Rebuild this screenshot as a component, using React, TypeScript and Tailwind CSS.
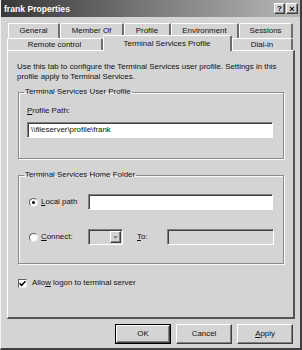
import React from "react";

const sunken =
  "border border-t-[#808080] border-l-[#808080] border-r-white border-b-white shadow-[inset_1px_1px_0_#404040]";
const raised =
  "border border-t-white border-l-white border-r-[#404040] border-b-[#404040] shadow-[inset_-1px_-1px_0_#808080]";

function Tab({ label, w, active }: { label: string; w: string; active?: boolean }) {
  return (
    <div
      className={`${w} ${
        active ? "h-[16px] mb-[-1px] relative z-20" : "h-full"
      } flex items-center justify-center bg-[#d4d4d4] rounded-t-[2px] border-l border-t border-white border-r-2 border-r-[#6e6e6e]`}
    >
      {label}
    </div>
  );
}

function WinButton({ children, def }: { children: React.ReactNode; def?: boolean }) {
  return (
    <div
      className={`w-[56px] h-[20px] flex items-center justify-center ${
        def ? "border border-black" : ""
      }`}
    >
      <div className={`w-full h-full flex items-center justify-center ${raised}`}>{children}</div>
    </div>
  );
}

function Group({ title, children, className }: { title: string; children: React.ReactNode; className?: string }) {
  return (
    <fieldset
      className={`w-[266px] ml-[1px] border border-[#8a8a8a] shadow-[inset_1px_1px_0_#fafafa,1px_1px_0_#fafafa] ${className ?? ""}`}
    >
      <legend className="ml-[5px] px-[1px] leading-[10px]">{title}</legend>
      {children}
    </fieldset>
  );
}

export default function App() {
  return (
    <div className="w-[302px] h-[350px] bg-[#d4d4d4] flex flex-col border-l border-l-[#f2f2f2] border-r-2 border-r-[#404040] border-b-2 border-b-[#404040] font-['Liberation_Sans',Arial,sans-serif] text-[7.9px] leading-[10px] text-[#111] overflow-hidden">
      {/* Title bar */}
      <div className="h-[17px] shrink-0 flex items-center pl-[3px] pr-[2px] bg-gradient-to-r from-[#383838] via-[#7a7a7a] to-[#b8b8b8]">
        <span className="text-white font-bold text-[8.6px] flex-1">frank Properties</span>
        <div className="flex gap-[1px]">
          <div className={`w-[11px] h-[11px] bg-[#d4d4d4] flex items-center justify-center font-bold text-[8px] text-black ${raised}`}>
            ?
          </div>
          <div className={`w-[12px] h-[11px] bg-[#d4d4d4] flex items-center justify-center font-bold text-[9px] text-black ${raised}`}>
            ×
          </div>
        </div>
      </div>

      <div className="flex-1 flex flex-col pl-[6px] pr-[7px]">
        {/* Tabs */}
        <div className="flex h-[15px] mt-[6px] ml-[1px]">
          <Tab label="General" w="w-[52px]" />
          <Tab label="Member Of" w="w-[64px]" />
          <Tab label="Profile" w="w-[47px]" />
          <Tab label="Environment" w="w-[68px]" />
          <Tab label="Sessions" w="w-[54px]" />
        </div>
        <div className="flex h-[12px] items-end relative z-10">
          <Tab label="Remote control" w="w-[96px]" />
          <Tab label="Terminal Services Profile" w="w-[129px]" active />
          <Tab label="Dial-in" w="w-[61px]" />
        </div>

        {/* Panel */}
        <div className="h-[269px] w-[288px] flex flex-col border-l border-t border-white border-r-2 border-r-[#555] border-b-2 border-b-[#555] pl-[9px] pt-[11px]">
          <p>
            Use this tab to configure the Terminal Services user profile. Settings in this
            <br />
            profile apply to Terminal Services.
          </p>

          <Group title="Terminal Services User Profile" className="mt-[5px]">
            <div className="px-[8px] pb-[20px]">
              <div className="mt-[9px]">
                <span className="underline">P</span>rofile Path:
              </div>
              <div className={`mt-[6px] w-[246px] h-[16px] bg-white flex items-center pl-[3px] ${sunken}`}>
                \\fileserver\profile\frank
              </div>
            </div>
          </Group>

          <Group title="Terminal Services Home Folder" className="mt-[11px]">
            <div className="pl-[10px] pb-[18px]">
              <div className="mt-[14px] flex items-center">
                <div className="w-[59px] flex items-center gap-[3px]">
                  <div className="w-[9px] h-[9px] rounded-full bg-white border border-t-[#606060] border-l-[#606060] border-r-[#e8e8e8] border-b-[#e8e8e8] flex items-center justify-center">
                    <div className="w-[3px] h-[3px] rounded-full bg-black" />
                  </div>
                  <span>
                    <span className="underline">L</span>ocal path
                  </span>
                </div>
                <div className={`w-[185px] h-[16px] bg-white ${sunken}`} />
              </div>
              <div className="mt-[19px] flex items-center">
                <div className="w-[59px] flex items-center gap-[3px]">
                  <div className="w-[9px] h-[9px] rounded-full bg-white border border-t-[#606060] border-l-[#606060] border-r-[#e8e8e8] border-b-[#e8e8e8]" />
                  <span>
                    <span className="underline">C</span>onnect:
                  </span>
                </div>
                <div className={`w-[35px] h-[16px] flex justify-end p-[1px] ${sunken}`}>
                  <div className={`w-[11px] h-full bg-[#d4d4d4] flex items-center justify-center ${raised}`}>
                    <svg width="5" height="3" viewBox="0 0 5 3">
                      <path d="M0 0h5L2.5 3z" fill="#8a8a8a" />
                    </svg>
                  </div>
                </div>
                <span className="ml-[14px] w-[30px]">
                  <span className="underline">T</span>o:
                </span>
                <div className={`w-[107px] h-[16px] ${sunken}`} />
              </div>
            </div>
          </Group>

          <div className="mt-[14px] ml-[1px] flex items-center gap-[5px]">
            <div className="w-[9px] h-[9px] bg-white border border-t-[#606060] border-l-[#606060] border-r-[#e8e8e8] border-b-[#e8e8e8] flex items-center justify-center">
              <svg width="7" height="7" viewBox="0 0 7 7">
                <path d="M0.5 3.2L2.6 5.3L6.5 1.2" stroke="black" strokeWidth="1.6" fill="none" />
              </svg>
            </div>
            <span>
              Allo<span className="underline">w</span> logon to terminal server
            </span>
          </div>
        </div>

        {/* Buttons */}
        <div className="mt-[5px] flex justify-end gap-[5px]">
          <WinButton def>OK</WinButton>
          <WinButton>Cancel</WinButton>
          <WinButton>
            <span>
              <span className="underline">A</span>pply
            </span>
          </WinButton>
        </div>
      </div>
    </div>
  );
}
